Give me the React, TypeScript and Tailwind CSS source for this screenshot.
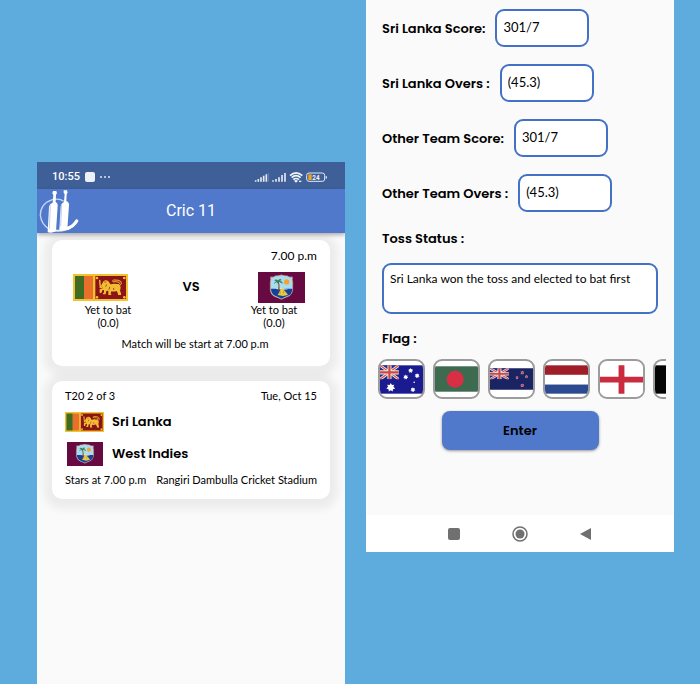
import type { ReactNode } from "react";

const bodyFont = "font-['Lato','Open_Sans',sans-serif]";
const headingFont = "font-['Poppins','Inter',sans-serif] font-semibold";

function SriLankaFlag({ className }: { className: string }) {
  return (
    <svg viewBox="84 114 165 81" preserveAspectRatio="none" className={className} role="img" aria-label="Sri Lanka">
      <rect x="84" y="114" width="165" height="81" fill="#f2c230" />
      <rect x="90" y="120" width="27" height="69" fill="#3f6b22" />
      <rect x="117" y="120" width="27" height="69" fill="#e8702a" />
      <rect x="151" y="120" width="92" height="69" fill="#8c1418" />
      <g fill="#f0bd33">
        <circle cx="156" cy="126" r="4" />
        <circle cx="238" cy="126" r="4" />
        <circle cx="156" cy="184" r="4" />
        <circle cx="238" cy="184" r="4" />
        <path d="M173 140 q2-6 8-7 q8-1 11 5 l4 7 q14-3 25 0 q6 3 6 10 l-2 9 3 8 v5 h-9 v-4 l-4-8 q-8 3-16 1 l-2 7 3 4 h-10 v-13 l-6 1 -2 10 h-8 v-4 l3-1 v-8 l-5 1 -3 8 h-5 v-11 l9-3 -3-6 -4 1 z" />
        <path d="M162 132 l4-1 2 20 4 2 -1 4 -7-1 z" />
      </g>
      <path d="M219 147 q9-4 3-8 q-11-4-17-1 q-5-5 1-6 q15-1 21 4 q6 7-3 13" fill="none" stroke="#f0bd33" strokeWidth="3" />
      <path d="M178 138 h6 M185 145 l-3 7 M194 153 l-2 8 M205 156 l2 6" stroke="#8c1418" strokeWidth="2" />
    </svg>
  );
}

function WestIndiesFlag({ className }: { className: string }) {
  return (
    <svg viewBox="204 108 141 94" preserveAspectRatio="none" className={className} role="img" aria-label="West Indies">
      <rect x="204" y="108" width="141" height="94" fill="#670a42" />
      <path d="M242 123 q9 2 14-3 q9 0 18-3 q9 3 18 3 q6 5 15 3 q-1 9 1 16 v22 q-2 18-16 22 q-11 4-18 8 q-8-5-18-8 q-14-5-15-22 v-22 q2-8 1-16z" fill="#a9dcef" stroke="#d6a679" strokeWidth="2" />
      <path d="M243 159 h64 q0 18-15 22 q-10 4-18 8 q-8-5-17-8 q-14-5-14-22z" fill="#17409a" />
      <path d="M257 159 q10-5 22-2 l16 3 q-16 3-32 0z" fill="#dfe7e2" />
      <circle cx="290" cy="138" r="8" fill="#f5a42a" />
      <path d="M263 137 q4 12 1 26 h5 q1-15-3-26z" fill="#80512b" />
      <path d="M252 145 q1-8 7-9 l-7-3 q7-5 12 1 q5-8 11-2 l-6 3 q9 0 9 9 l-10-6 -5 5 -4-5z" fill="#36805c" />
      <path d="M263 178 l5-9 4-9 6-3 6 8 7 8 3 5 -15 3z" fill="#ecc83e" />
      <path d="M270 166 v9 M281 165 v8" stroke="#7f9a48" strokeWidth="2" />
    </svg>
  );
}

function UnionJack({ height }: { height: number }) {
  return (
    <svg x="0" y="0" width="58" height={height} viewBox="0 0 60 44" preserveAspectRatio="none">
      <rect width="60" height="44" fill="#232b86" />
      <path d="M0 0 60 44 M60 0 0 44" stroke="#f3e9e2" strokeWidth="9" />
      <path d="M0 0 60 44 M60 0 0 44" stroke="#cf5150" strokeWidth="4" />
      <path d="M30 0v44 M0 22h60" stroke="#f3e9e2" strokeWidth="13" />
      <path d="M30 0v44 M0 22h60" stroke="#cc4742" strokeWidth="7" />
    </svg>
  );
}

function Star({ x, y, r, fill = "#fff" }: { x: number; y: number; r: number; fill?: string }) {
  const points = Array.from({ length: 14 }, (_, i) => {
    const radius = i % 2 === 0 ? r : r * 0.6;
    const angle = (Math.PI * i) / 7 - Math.PI / 2;
    return `${x + radius * Math.cos(angle)},${y + radius * Math.sin(angle)}`;
  }).join(" ");
  return <polygon points={points} fill={fill} />;
}

const flags: { name: string; art: ReactNode }[] = [
  {
    name: "Australia",
    art: (
      <svg viewBox="0 0 132 87" className="h-[29px] w-11">
        <rect width="132" height="87" fill="#1b1b91" />
        <UnionJack height={43} />
        <Star x={33} y={68} r={14} />
        <Star x={94} y={16} r={8} />
        <Star x={79} y={36} r={8} />
        <Star x={114} y={32} r={8} />
        <Star x={101} y={75} r={8} />
        <Star x={105} y={52} r={3} />
      </svg>
    ),
  },
  {
    name: "Bangladesh",
    art: (
      <svg viewBox="0 0 132 78" className="h-[26px] w-11">
        <rect width="132" height="78" fill="#3d6b50" />
        <circle cx="62" cy="40" r="26" fill="#d92f45" />
      </svg>
    ),
  },
  {
    name: "New Zealand",
    art: (
      <svg viewBox="0 0 132 66" className="h-[22px] w-11">
        <rect width="132" height="66" fill="#1b2462" />
        <UnionJack height={34} />
        {[[99, 14, 6], [83, 29, 5], [112, 26, 5], [99, 53, 6]].map(([x, y, r]) => (
          <g key={`${x}-${y}`}>
            <Star x={x} y={y} r={r} fill="#e7c7d1" />
            <circle cx={x} cy={y} r={r * 0.6} fill="#cc4458" />
          </g>
        ))}
      </svg>
    ),
  },
  {
    name: "Netherlands",
    art: (
      <svg viewBox="0 0 132 87" className="h-[29px] w-11">
        <rect width="132" height="87" fill="#fff" />
        <rect width="132" height="29" fill="#a01c29" />
        <rect y="59" width="132" height="28" fill="#2c4a8f" />
      </svg>
    ),
  },
  {
    name: "England",
    art: (
      <svg viewBox="0 0 132 87" className="h-[29px] w-11">
        <rect width="132" height="87" fill="#fff" />
        <path d="M66 0v87 M0 44h132" stroke="#cb2b3e" strokeWidth="18" />
      </svg>
    ),
  },
  {
    name: "Other",
    art: (
      <svg viewBox="0 0 132 87" className="h-[29px] w-11">
        <rect width="132" height="87" fill="#050505" />
      </svg>
    ),
  },
];

function StatusIcons() {
  return (
    <svg viewBox="192 34 222 36" className="h-3 w-[74px]" aria-hidden="true">
      <g stroke="#e4e9f2" strokeWidth="5">
        <path d="M197 66v-4 M205 66v-8 M213 66v-13 M221 66v-18 M229 66v-22" />
        <path d="M235 66v-26" stroke="#8296bb" strokeWidth="2" />
        <path d="M249 66v-4 M258 66v-8 M267 66v-13 M276 66v-20 M285 66v-26" />
      </g>
      <g fill="none" stroke="#f2f5fa" strokeWidth="5">
        <path d="M300 48 q18-17 37 0 M305 54 q13-12 27 0 M310 60 q8-7 17 0" />
      </g>
      <path d="M312 63 l6 6 6-6 q-6-4-12 0z M327 63h7v4h-7z" fill="#f2f5fa" />
      <rect x="350" y="40" width="54" height="25" rx="7" fill="none" stroke="#e4e9f2" strokeWidth="3" />
      <path d="M355 44h10v17h-10z" fill="#f1a51e" />
      <path d="M407 48q4 0 4 5t-4 5z" fill="#e4e9f2" />
      <text x="367" y="60" fontSize="19" fontWeight="700" fill="#f2f5fa" fontFamily="Roboto, sans-serif">24</text>
    </svg>
  );
}

function Logo() {
  return (
    <svg viewBox="0 87 129 129" className="size-[43px]" aria-hidden="true">
      <path d="M80 121 q-12-10-34-5 q-36 12-36 47 q3 26 25 40" fill="none" stroke="#c9d6ef" strokeWidth="4" />
      <path d="M33 205 q28 8 52 1 q25-7 35-27" fill="none" stroke="#e9eef9" strokeWidth="6" />
      <path d="M92 202 q18-7 27-22" fill="none" stroke="#fff" strokeWidth="10" strokeLinecap="round" />
      <g fill="#fff">
        <path d="M48 90 h10 l2 7 -3 4 -1 22 q7 3 6 12 l-5 76 q-13 7-25 3 l4-76 q1-9 11-13 l2-23 -3-5z" />
        <path d="M80 88 h10 l2 7 -3 4 -1 21 q9 4 8 13 l-5 71 q-12 6-24 2 l4-70 q2-9 10-14 l2-22 -3-5z" />
      </g>
      <path d="M40 133 l-3 70 M74 131 l-3 65" stroke="#9fb5e1" strokeWidth="2" />
    </svg>
  );
}

const cardClass =
  "rounded-[10px] bg-white px-[13px] text-black shadow-[0_2px_8px_8px_rgba(0,0,0,0.06)]";

function Side({ children, overs }: { children: ReactNode; overs: string }) {
  return (
    <div className="flex w-[86px] flex-col items-center text-center text-[11px] leading-[13px]">
      <div className="flex h-8 w-full items-center">{children}</div>
      <span>Yet to bat</span>
      <span>{overs}</span>
    </div>
  );
}

function MatchesScreen() {
  return (
    <section className="mt-[162px] overflow-hidden bg-[#fafafa]">
      <div className="flex h-[27px] items-center bg-[#3f5f98] pt-[3px] pr-[17px] pl-[15px] font-['Roboto',sans-serif] text-[11px] font-medium text-white">
        <span>10:55</span>
        <span className="ml-[5px] size-[10px] rounded-xs bg-[#edf0f6]" />
        <span className="ml-[5px] flex gap-[2px]">
          <i className="size-[2px] rounded-full bg-[#dfe5f0]" />
          <i className="size-[2px] rounded-full bg-[#dfe5f0]" />
          <i className="size-[2px] rounded-full bg-[#dfe5f0]" />
        </span>
        <span className="ml-auto flex items-center"><StatusIcons /></span>
      </div>
      <header className="relative grid h-11 grid-cols-[43px_1fr_43px] items-center bg-[#5079cb] shadow-[0_2px_4px_rgba(0,0,0,0.3)]">
        <Logo />
        <h1 className="text-center font-['Roboto',sans-serif] text-base text-white">Cric 11</h1>
      </header>
      <main className="flex flex-col gap-[15px] px-[15px] pt-[7px]">
        <article className={`${cardClass} h-[126px] pt-2`}>
          <p className="text-right text-xs leading-4">7.00 p.m</p>
          <div className="mt-[7px] flex justify-between">
            <Side overs="(0.0)"><SriLankaFlag className="ml-2 h-[27px] w-[55px]" /></Side>
            <strong className={`${headingFont} mt-2 text-[13px] leading-4`}>VS</strong>
            <Side overs="(0.0)"><WestIndiesFlag className="ml-[27px] h-[31px] w-[47px]" /></Side>
          </div>
          <p className="mt-2 pl-2 text-center text-[11px] leading-[14px]">Match will be start at 7.00 p.m</p>
        </article>
        <article className={`${cardClass} h-[118px] pt-[7px] text-[11px]`}>
          <div className="flex justify-between leading-4">
            <span>T20 2 of 3</span>
            <span>Tue, Oct 15</span>
          </div>
          <div className="mt-[2px] grid grid-cols-[39px_1fr] items-center gap-x-2">
            <div className="flex h-8 items-center"><SriLankaFlag className="h-5 w-[39px]" /></div>
            <h2 className={`${headingFont} text-[13px]`}>Sri Lanka</h2>
            <div className="flex h-8 items-center justify-center"><WestIndiesFlag className="h-6 w-9" /></div>
            <h2 className={`${headingFont} text-[13px]`}>West Indies</h2>
          </div>
          <div className="mt-[2px] flex justify-between leading-4 whitespace-nowrap">
            <span>Stars at 7.00 p.m</span>
            <span>Rangiri Dambulla Cricket Stadium</span>
          </div>
        </article>
      </main>
    </section>
  );
}

const fieldClass = `${bodyFont} border-2 border-[#4471c8] bg-white px-[6px] text-black rounded-[9px]`;

const fields = [
  { id: "sl-score", label: "Sri Lanka Score:", value: "301/7" },
  { id: "sl-overs", label: "Sri Lanka Overs :", value: "(45.3)" },
  { id: "ot-score", label: "Other Team Score:", value: "301/7" },
  { id: "ot-overs", label: "Other Team Overs :", value: "(45.3)" },
];

function ScoreScreen() {
  return (
    <section className="flex flex-col self-start bg-[#fafafa]">
      <form className="flex flex-col pt-[9px] pr-2 pb-[65px] pl-3" onSubmit={(e) => e.preventDefault()}>
        <div className="flex flex-col gap-[17px] pl-1">
          {fields.map((f) => (
            <div key={f.id} className="flex items-center gap-[10px]">
              <label htmlFor={f.id} className={`${headingFont} pt-[2px] text-[13px]`}>{f.label}</label>
              <input id={f.id} defaultValue={f.value} className={`${fieldClass} h-[38px] w-[94px] pb-[2px] text-[13px]`} />
            </div>
          ))}
        </div>
        <label htmlFor="toss" className={`${headingFont} mt-[17px] pl-1 text-[13px] leading-5`}>Toss Status :</label>
        <textarea
          id="toss"
          defaultValue="Sri Lanka won the toss and elected to bat first"
          className={`${fieldClass} mt-[14px] mr-2 ml-1 h-[51px] resize-none overflow-hidden pt-[6px] text-xs leading-4`}
        />
        <h2 className={`${headingFont} mt-[15px] pl-1 text-[13px] leading-5`}>Flag :</h2>
        <div className="mt-[10px] flex gap-2 overflow-hidden">
          {flags.map((f) => (
            <button
              key={f.name}
              type="button"
              aria-label={f.name}
              className="flex h-10 w-[47px] shrink-0 items-center justify-center overflow-hidden rounded-[9px] border-2 border-[#9c9c9c] bg-white"
            >
              {f.art}
            </button>
          ))}
        </div>
        <button
          type="submit"
          className={`${headingFont} mt-3 mr-1 h-[39px] w-[157px] self-center rounded-lg bg-[#5079cb] text-[13px] text-black shadow-[0_1px_3px_rgba(0,0,0,0.4)]`}
        >
          Enter
        </button>
      </form>
      <nav className="flex h-[37px] items-center justify-center gap-[58px] bg-white text-[#707070]">
        <button type="button" aria-label="Recent apps">
          <svg viewBox="0 0 12 12" className="size-3"><rect width="12" height="12" rx="2" fill="currentColor" /></svg>
        </button>
        <button type="button" aria-label="Home" className="mx-[-6px]">
          <svg viewBox="0 0 32 32" className="size-4">
            <circle cx="16" cy="16" r="14" fill="none" stroke="currentColor" strokeWidth="3" />
            <circle cx="16" cy="16" r="9" fill="currentColor" />
          </svg>
        </button>
        <button type="button" aria-label="Back">
          <svg viewBox="0 0 12 14" className="h-[14px] w-3"><path d="M11 1v12L0 7z" fill="currentColor" /></svg>
        </button>
      </nav>
    </section>
  );
}

export default function App() {
  return (
    <div className={`${bodyFont} grid min-h-screen grid-cols-2 gap-[21px] bg-[#5eabde] pr-[26px] pl-[37px]`}>
      <MatchesScreen />
      <ScoreScreen />
    </div>
  );
}
